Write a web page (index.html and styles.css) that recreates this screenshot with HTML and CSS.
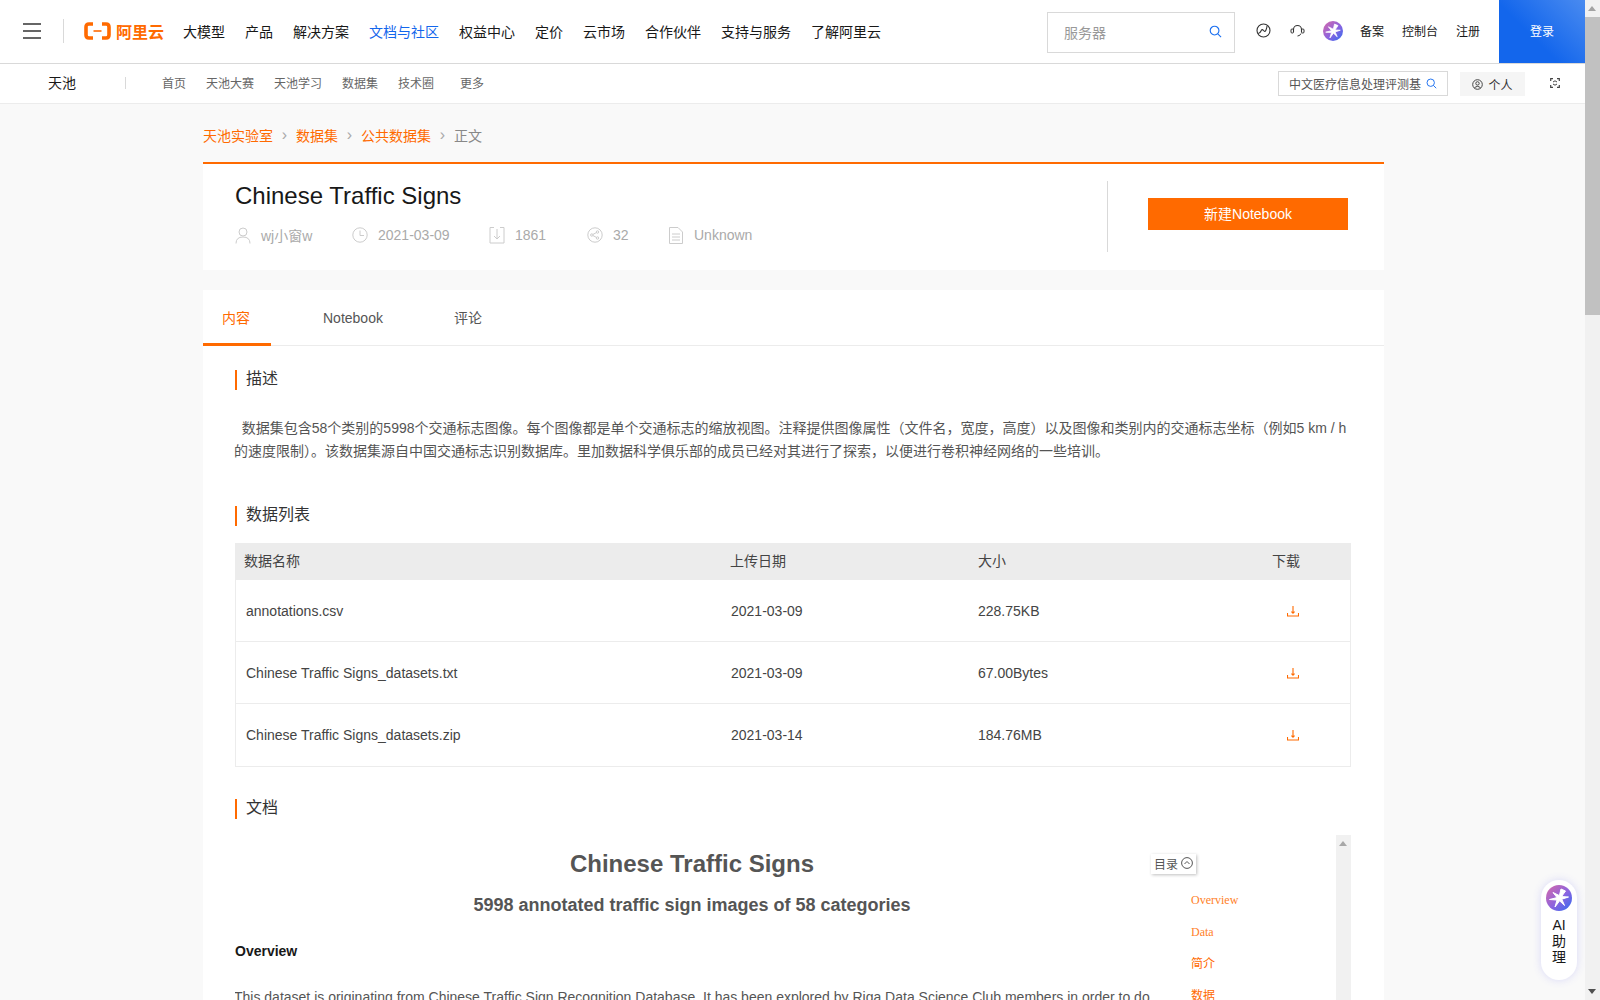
FILE: index.html
```html
<!DOCTYPE html>
<html lang="zh-CN">
<head>
  <meta charset="UTF-8" />
  <title>Chinese Traffic Signs | 天池</title>
  <link rel="stylesheet" href="styles.css">
</head>
<body>
  <svg width="0" height="0" class="defs">
    <defs>
      <linearGradient id="starGrad" x1="0" y1="0" x2="1" y2="1">
        <stop offset="0" stop-color="#d86aa8" />
        <stop offset="0.55" stop-color="#8a63e0" />
        <stop offset="1" stop-color="#2f6df0" />
      </linearGradient>
      <symbol id="star" viewBox="0 0 26 26">
        <circle cx="13" cy="13" r="13" fill="url(#starGrad)" />
        <path d="M15 4 13.4 10.6 7 7.5 11 12.6 3.5 14.5 11 15 9 22 13.6 15.8 18.5 20.5 15.8 14.2 22.5 12 15.6 11.6 19.5 6Z" fill="#fff" stroke="#fff" stroke-width="1" stroke-linejoin="round" />
      </symbol>
      <symbol id="dl" viewBox="0 0 12 12">
        <path d="M6 1v7M4.4 6.6 6 8.2 7.6 6.6M.5 8v3h11V8" fill="none" stroke="#ff6a00" stroke-width="1.1" />
      </symbol>
      <symbol id="find" viewBox="0 0 14 14">
        <circle cx="6" cy="6" r="4.7" fill="none" stroke="#1a6ff0" stroke-width="1.2" />
        <path d="M9.5 9.5 13 13" stroke="#1a6ff0" stroke-width="1.2" />
      </symbol>
    </defs>
  </svg>

  <div class="page">
    <div class="main">
      <header class="topbar">
        <div class="menu-btn"><span></span><span></span><span></span></div>
        <i class="top-sep"></i>
        <a class="logo">
          <svg width="27" height="18" viewBox="0 0 27 18">
            <path d="M9 2H5Q2 2 2 5V13Q2 16 5 16H9M18 2H22Q25 2 25 5V13Q25 16 22 16H18" fill="none" stroke="#ff6a00" stroke-width="3.6" />
            <path d="M9.5 9H17.5" stroke="#ff6a00" stroke-width="1.6" />
          </svg>
          <span>阿里云</span>
        </a>
        <nav class="top-nav">
          <a>大模型</a><a>产品</a><a>解决方案</a><a class="on">文档与社区</a><a>权益中心</a><a>定价</a><a>云市场</a><a>合作伙伴</a><a>支持与服务</a><a>了解阿里云</a>
        </nav>
        <div class="top-search">
          <span>服务器</span>
          <svg width="13" height="13"><use href="#find" /></svg>
        </div>
        <div class="top-icons">
          <svg width="15" height="15" viewBox="0 0 15 15"><circle cx="7.5" cy="7.5" r="6.5" fill="none" stroke="#333" stroke-width="1.1" /><path d="M2 10.5Q4 10.5 5 8T7.5 7.5 10 7 11 3" fill="none" stroke="#333" stroke-width="1.1" /></svg>
          <svg width="15" height="15" viewBox="0 0 15 15"><path d="M3.5 9V6.5a4 4 0 0 1 8 0V9" fill="none" stroke="#333" stroke-width="1.1" /><rect x="1" y="6" width="2.5" height="4" rx="1" fill="none" stroke="#333" /><rect x="11.5" y="6" width="2.5" height="4" rx="1" fill="none" stroke="#333" /><path d="M11 10.5Q10 13 7.5 13" fill="none" stroke="#333" /></svg>
          <svg class="top-star" width="20" height="20"><use href="#star" /></svg>
        </div>
        <div class="top-links"><a>备案</a><a>控制台</a><a>注册</a></div>
        <a class="login">登录</a>
      </header>

      <div class="subbar">
        <span class="brand">天池</span>
        <i class="sub-sep"></i>
        <nav class="sub-nav">
          <a>首页</a><a>天池大赛</a><a>天池学习</a><a>数据集</a><a>技术圈</a><a class="more">更多</a>
        </nav>
        <div class="sub-search">
          <span>中文医疗信息处理评测基</span>
          <svg width="11" height="11"><use href="#find" /></svg>
        </div>
        <div class="personal">
          <svg width="11" height="11" viewBox="0 0 11 11"><circle cx="5.5" cy="5.5" r="4.8" fill="none" stroke="#444" /><circle cx="5.5" cy="4.4" r="1.7" fill="none" stroke="#444" /><path d="M2.4 9Q5.5 5.8 8.6 9" fill="none" stroke="#444" /></svg>
          <span>个人</span>
        </div>
        <svg class="expand" width="10" height="10" viewBox="0 0 10 10"><path d="M3 .7H.7v2.3M7 .7h2.3v2.3M3 9.3H.7V7M7 9.3h2.3V7" fill="none" stroke="#444" stroke-width="1.2" /><path d="M3 4 5 2.8 7 4M3 6 5 7.2 7 6" fill="none" stroke="#444" /></svg>
      </div>

      <div class="content">
        <div class="crumbs">
          <a>天池实验室</a><b>›</b><a>数据集</a><b>›</b><a>公共数据集</a><b>›</b><span>正文</span>
        </div>

        <section class="summary">
          <div class="summary-left">
            <h1>Chinese Traffic Signs</h1>
            <div class="meta">
              <span class="meta-item w-user">
                <svg width="16" height="18" viewBox="0 0 16 18"><circle cx="8" cy="6" r="4" fill="none" stroke="#ccc" /><path d="M1 17.5Q1 11 8 11T15 17.5" fill="none" stroke="#ccc" /></svg>
                wj小窗w
              </span>
              <span class="meta-item w-date">
                <svg width="16" height="16" viewBox="0 0 16 16"><circle cx="8" cy="8" r="7.2" fill="none" stroke="#ccc" /><path d="M8 3.5V8.5H12" fill="none" stroke="#ccc" /></svg>
                2021-03-09
              </span>
              <span class="meta-item w-down">
                <svg width="16" height="18" viewBox="0 0 16 18"><path d="M5 1.5H1V17H15V1.5H11M8 3V13M5 10 8 13 11 10" fill="none" stroke="#ccc" /></svg>
                1861
              </span>
              <span class="meta-item w-share">
                <svg width="16" height="16" viewBox="0 0 16 16"><circle cx="8" cy="8" r="7.2" fill="none" stroke="#ccc" /><circle cx="4.8" cy="8" r="1.2" fill="none" stroke="#ccc" /><circle cx="10.5" cy="5" r="1.2" fill="none" stroke="#ccc" /><circle cx="10.5" cy="11" r="1.2" fill="none" stroke="#ccc" /><path d="M6 7.4 9.4 5.6M6 8.6 9.4 10.4" stroke="#ccc" /></svg>
                32
              </span>
              <span class="meta-item w-last">
                <svg width="14" height="17" viewBox="0 0 14 17"><path d="M.5.5H9L13.5 5V16.5H.5ZM3 7H11M3 10H11M3 13H11" fill="none" stroke="#ccc" /></svg>
                Unknown
              </span>
            </div>
          </div>
          <div class="summary-right">
            <button class="new-btn">新建Notebook</button>
          </div>
        </section>

        <section class="detail">
          <div class="tabs">
            <a class="tab on">内容</a>
            <a class="tab">Notebook</a>
            <a class="tab">评论</a>
          </div>

          <div class="detail-body">
            <h3 class="sec-title">描述</h3>
            <p class="desc">&nbsp;&nbsp;数据集包含58个类别的5998个交通标志图像。每个图像都是单个交通标志的缩放视图。注释提供图像属性（文件名，宽度，高度）以及图像和类别内的交通标志坐标（例如5 km / h的速度限制）。该数据集源自中国交通标志识别数据库。里加数据科学俱乐部的成员已经对其进行了探索，以便进行卷积神经网络的一些培训。</p>

            <h3 class="sec-title">数据列表</h3>
            <div class="file-table">
              <div class="file-row file-head">
                <span>数据名称</span><span>上传日期</span><span>大小</span><span>下载</span>
              </div>
              <div class="file-row">
                <span>annotations.csv</span><span>2021-03-09</span><span>228.75KB</span>
                <span><svg width="12" height="12"><use href="#dl" /></svg></span>
              </div>
              <div class="file-row">
                <span>Chinese Traffic Signs_datasets.txt</span><span>2021-03-09</span><span>67.00Bytes</span>
                <span><svg width="12" height="12"><use href="#dl" /></svg></span>
              </div>
              <div class="file-row">
                <span>Chinese Traffic Signs_datasets.zip</span><span>2021-03-14</span><span>184.76MB</span>
                <span><svg width="12" height="12"><use href="#dl" /></svg></span>
              </div>
            </div>

            <h3 class="sec-title">文档</h3>
            <div class="doc">
              <article class="doc-main">
                <h2>Chinese Traffic Signs</h2>
                <h4>5998 annotated traffic sign images of 58 categories</h4>
                <h5>Overview</h5>
                <p>This dataset is originating from Chinese Traffic Sign Recognition Database. It has been explored by Riga Data Science Club members in order to do</p>
              </article>
              <aside class="toc">
                <div class="toc-btn">
                  目录
                  <svg width="12" height="12" viewBox="0 0 12 12"><circle cx="6" cy="6" r="5.4" fill="none" stroke="#555" /><path d="M3.5 7 6 4.5 8.5 7" fill="none" stroke="#555" /></svg>
                </div>
                <ul>
                  <li class="en">Overview</li>
                  <li class="en">Data</li>
                  <li>简介</li>
                  <li>数据</li>
                </ul>
              </aside>
              <div class="doc-scroll"><i></i></div>
            </div>
          </div>
        </section>
      </div>

      <div class="ai-float">
        <svg width="26" height="26"><use href="#star" /></svg>
        <span>AI<br>助<br>理</span>
      </div>
    </div>

    <div class="page-scroll">
      <i class="arrow-up"></i>
      <div class="thumb"></div>
      <i class="arrow-down"></i>
    </div>
  </div>
</body>
</html>
```

FILE: styles.css
```css
* {
  box-sizing: border-box;
}

html, body {
  margin: 0;
  padding: 0;
  height: 100%;
  overflow: hidden;
}

body {
  font-family: "Liberation Sans", "Noto Sans CJK SC", Arial, sans-serif;
  font-size: 14px;
  color: #333;
  background-color: #f9f9f9;
}

.defs {
  position: absolute;
}

.page {
  display: flex;
  height: 1000px;
}

.main {
  position: relative;
  width: 1585px;
  height: 1000px;
  overflow: hidden;
}

/* top bar */
.topbar {
  display: flex;
  align-items: center;
  height: 64px;
  padding-bottom: 2px;
  background-color: #fff;
  border-bottom: 1px solid #d9d9d9;
}

.menu-btn {
  display: flex;
  flex-direction: column;
  justify-content: space-between;
  width: 18px;
  height: 16px;
  margin-left: 23px;
}

.menu-btn span {
  height: 2px;
  background-color: #666;
}

.top-sep {
  width: 1px;
  height: 24px;
  margin-left: 22px;
  background-color: #d9d9d9;
}

.logo {
  display: flex;
  align-items: center;
  gap: 5px;
  margin-left: 20px;
  color: #ff6a00;
  font-size: 16px;
  font-weight: 700;
}

.top-nav {
  display: flex;
  gap: 20px;
  margin-left: 19px;
}

.top-nav a {
  color: #181818;
}

.top-nav .on {
  color: #1366ec;
}

.top-search {
  display: flex;
  align-items: center;
  justify-content: space-between;
  align-self: flex-start;
  width: 188px;
  height: 41px;
  margin: 12px 0 0 166px;
  padding: 0 12px 2px 16px;
  border: 1px solid #d9d9d9;
  color: #999;
}

.top-icons {
  display: flex;
  align-items: center;
  gap: 19px;
  margin-left: 21px;
}

.top-star {
  margin-left: -1px;
}

.top-links {
  display: flex;
  gap: 18px;
  margin-left: 17px;
  font-size: 12px;
  color: #181818;
}

.login {
  display: flex;
  align-items: center;
  justify-content: center;
  width: 86px;
  height: 63px;
  margin-left: auto;
  padding-bottom: 2px;
  align-self: flex-start;
  font-size: 12px;
  color: #fff;
  background: linear-gradient(45deg, #1366ec 40%, #4a8bf0);
}

/* second bar */
.subbar {
  display: flex;
  align-items: center;
  height: 40px;
  padding-bottom: 2px;
  background-color: #fff;
  border-bottom: 1px solid #ececec;
}

.brand {
  margin: 0 0 2px 48px;
  color: #181818;
}

.sub-sep {
  width: 1px;
  height: 12px;
  margin-left: 49px;
  background-color: #d9d9d9;
}

.sub-nav {
  display: flex;
  gap: 20px;
  margin-left: 36px;
  font-size: 12px;
  color: #666;
}

.sub-nav .more {
  margin-left: 6px;
}

.sub-search {
  display: flex;
  align-items: center;
  justify-content: space-between;
  align-self: flex-start;
  width: 170px;
  height: 25px;
  margin: 7px 0 0 auto;
  padding: 0 10px;
  border: 1px solid #d9d9d9;
  font-size: 12px;
  color: #555;
}

.sub-search span {
  white-space: nowrap;
  overflow: hidden;
}

.personal {
  display: flex;
  align-items: center;
  justify-content: center;
  align-self: flex-start;
  gap: 5px;
  width: 65px;
  height: 24px;
  margin: 8px 0 0 12px;
  font-size: 12px;
  color: #333;
  background-color: #f5f5f5;
}

.expand {
  margin: 0 25px;
}

/* content */
.content {
  width: 1181px;
  margin-left: 203px;
}

.crumbs {
  display: flex;
  align-items: center;
  height: 58px;
  padding-top: 4px;
  color: #ff6a00;
}

.crumbs b {
  width: 23px;
  text-align: center;
  font-weight: 400;
  font-size: 16px;
  color: #aaa;
}

.crumbs span {
  color: #888;
}

.summary {
  display: flex;
  height: 108px;
  background-color: #fff;
  border-top: 2px solid #ff6a00;
}

.summary-left {
  flex: 1;
  padding: 18px 0 0 32px;
}

h1 {
  margin: 0;
  font-size: 24px;
  font-weight: 400;
  line-height: 28px;
  color: #181818;
}

.meta {
  display: flex;
  align-items: center;
  margin-top: 15px;
  color: #aaa;
}

.meta-item {
  display: flex;
  align-items: center;
  gap: 10px;
  height: 20px;
}

.w-user {
  width: 117px;
}

.w-date {
  width: 137px;
}

.w-down {
  width: 98px;
}

.w-share {
  width: 82px;
}

.w-last {
  gap: 11px;
}

.summary-right {
  width: 277px;
  height: 71px;
  margin-top: 17px;
  padding: 17px 0 0 40px;
  border-left: 1px solid #d9d9d9;
}

.new-btn {
  width: 200px;
  height: 32px;
  padding: 0 0 2px;
  border: none;
  font-family: inherit;
  font-size: 14px;
  color: #fff;
  background-color: #ff6a00;
}

.detail {
  margin-top: 20px;
  background-color: #fff;
  height: 711px;
}

.tabs {
  display: flex;
  height: 56px;
  border-bottom: 1px solid #ececec;
}

.tab {
  height: 56px;
  padding: 20px 19px 0;
  line-height: 16px;
  color: #555;
}

.tab:nth-child(2) {
  margin-left: 33px;
}

.tab:nth-child(3) {
  margin-left: 33px;
}

.tab.on {
  width: 68px;
  color: #ff6a00;
  border-bottom: 3px solid #ff6a00;
}

.detail-body {
  padding: 0 32px;
}

.sec-title {
  height: 20px;
  margin: 0;
  padding-left: 9px;
  border-left: 2px solid #ff6a00;
  font-size: 16px;
  font-weight: 400;
  line-height: 18px;
  color: #333;
}

.detail-body > .sec-title:first-child {
  margin-top: 24px;
}

.desc {
  height: 89px;
  margin: 27px 0 0 -1px;
  line-height: 23px;
  color: #555;
}

.file-table {
  width: 1116px;
  margin-top: 17px;
  margin-bottom: 32px;
  border: 1px solid #ececec;
  border-top: none;
}

.file-row {
  display: grid;
  grid-template-columns: 485px 247px 288px 1fr;
  align-items: center;
  height: 62px;
  padding-left: 10px;
  border-bottom: 1px solid #ececec;
  color: #444;
}

.file-row:last-child {
  height: 62px;
  border-bottom: none;
}

.file-head {
  grid-template-columns: 486px 248px 294px 1fr;
  height: 37px;
  padding-left: 8px;
  padding-bottom: 4px;
  border-bottom: none;
  background-color: #ececec;
}

.file-row:not(.file-head) span:last-child {
  display: flex;
  padding-left: 21px;
}

.doc {
  display: flex;
  height: 165px;
  margin-top: 16px;
  overflow: hidden;
}

.doc-main {
  width: 914px;
  color: #555;
}

.doc-main h2 {
  margin: 15px 0 0;
  font-size: 24px;
  line-height: 28px;
  text-align: center;
}

.doc-main h4 {
  margin: 15px 0 0;
  font-size: 18px;
  line-height: 24px;
  text-align: center;
}

.doc-main h5 {
  margin: 24px 0 0;
  font-size: 14px;
  line-height: 20px;
  color: #181818;
}

.doc-main p {
  width: 920px;
  margin: 26px 0 0 -1px;
  line-height: 20px;
  white-space: nowrap;
}

.toc {
  width: 187px;
  padding-top: 19px;
  font-size: 12px;
}

.toc-btn {
  display: flex;
  align-items: center;
  gap: 3px;
  width: 45px;
  height: 20px;
  margin-left: 2px;
  padding: 0 0 2px 3px;
  color: #555;
  background-color: #fff;
  box-shadow: 1px 1px 3px rgba(0, 0, 0, 0.25);
}

.toc ul {
  margin: 17px 0 0 42px;
  padding: 0;
  list-style: none;
  color: #ff6a00;
}

.toc li {
  height: 32px;
  line-height: 18px;
}

.toc .en {
  font-family: "Liberation Serif", serif;
  color: #ff7f2a;
}

.doc-scroll {
  position: relative;
  width: 15px;
  background-color: #f1f1f1;
}

.doc-scroll i {
  position: absolute;
  left: 3px;
  top: 6px;
  border: 4.5px solid transparent;
  border-top: none;
  border-bottom: 5px solid #a8a8a8;
}

/* floating helper */
.ai-float {
  position: absolute;
  left: 1541px;
  top: 880px;
  display: flex;
  flex-direction: column;
  align-items: center;
  width: 36px;
  height: 100px;
  padding-top: 5px;
  border-radius: 18px;
  text-align: center;
  line-height: 16px;
  color: #181818;
  background-color: #fff;
  box-shadow: 0 0 8px rgba(90, 90, 240, 0.2);
}

.ai-float span {
  margin-top: 6px;
}

/* page scrollbar */
.page-scroll {
  position: relative;
  width: 15px;
  background-color: #f1f1f1;
}

.thumb {
  width: 15px;
  height: 298px;
  margin-top: 17px;
  background-color: #c1c1c1;
}

.arrow-up, .arrow-down {
  position: absolute;
  left: 3px;
  border: 4.5px solid transparent;
}

.arrow-up {
  top: 6px;
  border-top: none;
  border-bottom: 5px solid #a3a3a3;
}

.arrow-down {
  bottom: 6px;
  border-bottom: none;
  border-top: 5px solid #505050;
}
```
